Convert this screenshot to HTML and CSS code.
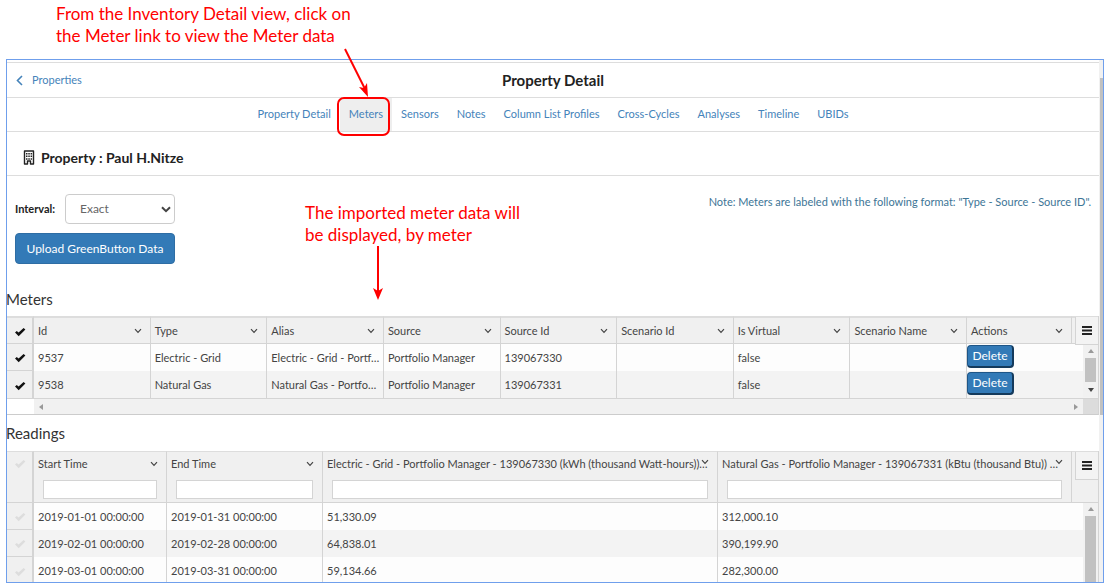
FILE: index.html
```
<!DOCTYPE html>
<html lang="en">
<head>
<meta charset="utf-8">
<title>Property Detail</title>
<link rel="stylesheet" href="styles.css">
</head>
<body>
<svg class="symbols" aria-hidden="true">
  <symbol id="check" viewBox="0 0 12 10"><path d="M1 5.6 2.8 3.9 4.6 5.5 9.6 1 11.4 2.6 4.7 9.2Z"/></symbol>
  <symbol id="down" viewBox="0 0 8 6"><path d="M1 1.2 4 4.4 7 1.2" fill="none" stroke="currentColor" stroke-width="1.2"/></symbol>
  <symbol id="bars" viewBox="0 0 10 9"><path d="M0 0h10v2H0zM0 3.5h10v2H0zM0 7h10v2H0z"/></symbol>
</svg>
<p class="note note-top">From the Inventory Detail view, click on<br>the Meter link to view the Meter data</p>
<main class="frame">
  <div class="content">
    <header class="title-bar">
      <a class="back" href="#"><svg class="back-icon" viewBox="0 0 7 11"><path d="M6 1 1.5 5.5 6 10" fill="none" stroke="currentColor" stroke-width="1.6"/></svg>Properties</a>
      <h1>Property Detail</h1>
    </header>
    <nav class="tabs">
      <a href="#">Property Detail</a>
      <a href="#" class="active">Meters</a>
      <a href="#">Sensors</a>
      <a href="#">Notes</a>
      <a href="#">Column List Profiles</a>
      <a href="#">Cross-Cycles</a>
      <a href="#">Analyses</a>
      <a href="#">Timeline</a>
      <a href="#">UBIDs</a>
    </nav>
    <h2 class="property">
      <svg class="building" viewBox="0 0 12 15"><path d="M1.5 1h9v13h-3v-3h-3v3h-3z" fill="none" stroke="currentColor" stroke-width="1.4" stroke-linejoin="round"/><path d="M3 3h1.5v1.5H3zM5.3 3h1.5v1.5H5.3zM7.6 3h1.5v1.5H7.6zM3 5.6h1.5v1.5H3zM5.3 5.6h1.5v1.5H5.3zM7.6 5.6h1.5v1.5H7.6zM3 8.2h1.5v1.5H3zM5.3 8.2h1.5v1.5H5.3zM7.6 8.2h1.5v1.5H7.6z" fill="currentColor"/></svg>
      Property : Paul H.Nitze
    </h2>
    <section class="controls">
      <div class="actions">
        <div class="interval">
          <label for="interval">Interval:</label>
          <span class="select-wrap"><select id="interval"><option>Exact</option></select>
          <svg class="select-arrow" viewBox="0 0 10 7"><path d="M1 1.2 5 5.2 9 1.2" fill="none" stroke="currentColor" stroke-width="2"/></svg></span>
        </div>
        <button class="upload" type="button">Upload GreenButton Data</button>
      </div>
      <p class="format">Note: Meters are labeled with the following format: "Type - Source - Source ID".</p>
    </section>

    <h3>Meters</h3>
    <div class="grid meters">
      <table>
        <colgroup><col class="c-check"><col><col><col><col><col><col><col><col><col class="c-actions"><col class="c-menu"></colgroup>
        <thead>
          <tr>
            <th class="pick"><svg class="check"><use href="#check"/></svg></th>
            <th><div class="head">Id<svg class="down"><use href="#down"/></svg></div></th>
            <th><div class="head">Type<svg class="down"><use href="#down"/></svg></div></th>
            <th><div class="head">Alias<svg class="down"><use href="#down"/></svg></div></th>
            <th><div class="head">Source<svg class="down"><use href="#down"/></svg></div></th>
            <th><div class="head">Source Id<svg class="down"><use href="#down"/></svg></div></th>
            <th><div class="head">Scenario Id<svg class="down"><use href="#down"/></svg></div></th>
            <th><div class="head">Is Virtual<svg class="down"><use href="#down"/></svg></div></th>
            <th><div class="head">Scenario Name<svg class="down"><use href="#down"/></svg></div></th>
            <th><div class="head">Actions<svg class="down"><use href="#down"/></svg></div></th>
            <th class="end"></th>
          </tr>
        </thead>
        <tbody>
          <tr><td class="pick"><svg class="check"><use href="#check"/></svg></td><td>9537</td><td>Electric - Grid</td><td>Electric - Grid - Portf…</td><td>Portfolio Manager</td><td>139067330</td><td></td><td>false</td><td></td><td class="act" colspan="2"><button class="delete" type="button">Delete</button></td></tr>
          <tr><td class="pick"><svg class="check"><use href="#check"/></svg></td><td>9538</td><td>Natural Gas</td><td>Natural Gas - Portfo…</td><td>Portfolio Manager</td><td>139067331</td><td></td><td>false</td><td></td><td class="act" colspan="2"><button class="delete" type="button">Delete</button></td></tr>
        </tbody>
      </table>
      <button class="menu" type="button" aria-label="Meters grid menu"><svg class="bars"><use href="#bars"/></svg></button>
      <div class="vbar"><i class="up"></i><b></b><i class="dn"></i></div>
      <div class="hbar"><i class="lt"></i><i class="rt"></i><b></b></div>
    </div>

    <h3>Readings</h3>
    <div class="grid readings">
      <table>
        <colgroup><col class="c-check"><col class="c-start"><col class="c-end"><col class="c-electric"><col><col class="c-menu"></colgroup>
        <thead>
          <tr>
            <th class="pick"><svg class="check"><use href="#check"/></svg></th>
            <th><div class="head">Start Time<svg class="down"><use href="#down"/></svg></div><input type="text" aria-label="Filter start time"></th>
            <th><div class="head">End Time<svg class="down"><use href="#down"/></svg></div><input type="text" aria-label="Filter end time"></th>
            <th><div class="head"><span class="long">Electric - Grid - Portfolio Manager - 139067330 (kWh (thousand Watt-hours))…</span><svg class="down over"><use href="#down"/></svg></div><input type="text" aria-label="Filter electric readings"></th>
            <th><div class="head"><span class="long">Natural Gas - Portfolio Manager - 139067331 (kBtu (thousand Btu)) …</span><svg class="down over"><use href="#down"/></svg></div><input type="text" aria-label="Filter gas readings"></th>
            <th class="end"></th>
          </tr>
        </thead>
        <tbody>
          <tr><td class="pick"><svg class="check"><use href="#check"/></svg></td><td>2019-01-01 00:00:00</td><td>2019-01-31 00:00:00</td><td>51,330.09</td><td colspan="2">312,000.10</td></tr>
          <tr><td class="pick"><svg class="check"><use href="#check"/></svg></td><td>2019-02-01 00:00:00</td><td>2019-02-28 00:00:00</td><td>64,838.01</td><td colspan="2">390,199.90</td></tr>
          <tr><td class="pick"><svg class="check"><use href="#check"/></svg></td><td>2019-03-01 00:00:00</td><td>2019-03-31 00:00:00</td><td>59,134.66</td><td colspan="2">282,300.00</td></tr>
        </tbody>
      </table>
      <button class="menu" type="button" aria-label="Readings grid menu"><svg class="bars"><use href="#bars"/></svg></button>
      <div class="vbar"><i class="up"></i><b></b></div>
    </div>
  </div>
  <div class="page-bar"><b></b></div>
</main>
<p class="note note-mid">The imported meter data will<br>be displayed, by meter</p>
<div class="ring"></div>
<svg class="arrow arrow-top" viewBox="0 0 30 52"><path d="M3 1 23 41" stroke="currentColor" stroke-width="2"/><path d="M26 49 17 39 22 40 25 35Z" fill="currentColor"/></svg>
<svg class="arrow arrow-mid" viewBox="0 0 10 54"><path d="M5 0V46" stroke="currentColor" stroke-width="2"/><path d="M5 54 0 42 5 45 10 42Z" fill="currentColor"/></svg>
</body>
</html>
```
FILE: styles.css
```
* { box-sizing: border-box; }
body {
  margin: 0;
  padding: 3px 5px 5px 6px;
  position: relative;
  background: #fff;
  color: #444;
  font: 11px/16px Lato, "Noto Sans", sans-serif;
}
h1, h2, h3, p { margin: 0; }
a { color: #4583ba; text-decoration: none; }
button, input, select { font: inherit; }
.symbols { position: absolute; width: 0; height: 0; }

.note { color: #f00; font: 17px/22px Lato, sans-serif; }
.note-top { padding: 0 0 0 50px; height: 56px; }

.frame {
  display: flex;
  height: 524px;
  border: 1px solid #6f9fec;
  overflow: hidden;
}
.content { flex: 1; min-width: 0; padding-top: 2px; }
.page-bar { width: 4px; background: #f1f1f1; padding: 18px 0 0 1px; }
.page-bar b { display: block; height: 337px; background: #c1c1c1; }

.title-bar {
  display: grid;
  grid-template-columns: 1fr auto 1fr;
  align-items: center;
  height: 36px;
  border-top: 1px solid #ddd;
  border-bottom: 1px solid #ddd;
}
.back { display: flex; align-items: center; gap: 9px; padding-left: 9px; }
.back-icon { width: 7px; height: 11px; }
h1 { font-size: 15px; line-height: 20px; color: #222; }
.tabs {
  display: flex;
  justify-content: center;
  height: 34px;
  border-bottom: 1px solid #ddd;
}
.tabs a { padding: 8px 9px; }
.tabs .active { background: #eee; }
.property {
  display: flex;
  align-items: center;
  gap: 6px;
  height: 44px;
  padding: 8px 16px 0;
  border-bottom: 1px solid #ddd;
  font-size: 14px;
  color: #222;
}
.building { width: 12px; height: 15px; }

.controls {
  display: flex;
  justify-content: space-between;
  padding: 18px 8px 0 8px;
  height: 112px;
}
.actions { width: 160px; }
.interval { display: flex; justify-content: space-between; align-items: center; margin-bottom: 9px; }
.interval label { font-weight: bold; color: #222; }
.select-wrap { position: relative; }
.select-wrap select {
  display: block;
  appearance: none;
  width: 110px;
  height: 30px;
  padding: 0 14px;
  border: 1px solid #ccc;
  border-radius: 4px;
  background: #fff;
  color: #666;
  font-size: 12px;
}
.select-arrow { position: absolute; right: 4px; top: 12px; width: 10px; height: 7px; color: #444; }
.upload {
  width: 100%;
  height: 31px;
  padding: 0;
  border: 1px solid #2e6da4;
  border-radius: 4px;
  background: #337ab7;
  color: #fff;
  font-size: 12px;
}
.format { color: #3d7596; }

h3 { margin-left: -1px; font-size: 15px; line-height: 22px; font-weight: normal; color: #333; }

.grid { position: relative; border-right: 1px solid #d4d4d4; }
.grid table { width: 100%; table-layout: fixed; border-collapse: separate; border-spacing: 0; }
.c-check { width: 27px; }
.c-actions { width: 105px; }
.c-menu { width: 26px; }
.c-start { width: 133px; }
.c-end { width: 156px; }
.c-electric { width: 395px; }
th, td {
  height: 27px;
  padding: 0 4px;
  border-right: 1px solid #d4d4d4;
  text-align: left;
  font-weight: normal;
  white-space: nowrap;
  overflow: hidden;
  text-overflow: ellipsis;
}
th { height: 28px; background: #f0f0f0; border-top: 2px solid #ddd; border-bottom: 1px solid #d4d4d4; color: #444; }
th.end, td:last-child { border-right: 0; }
td { padding-right: 0; background: #fdfdfd; }
tr:nth-child(even) td { background: #f3f3f3; }
tbody tr:last-child td { border-bottom: 1px solid #d4d4d4; height: 28px; }
.pick { padding: 0; text-align: center; border-right-width: 2px; }
tbody .pick, tbody tr:nth-child(even) .pick { background: #f0f0f0; border-bottom: 1px solid #d4d4d4; }
.check { display: inline-block; width: 12px; height: 10px; vertical-align: middle; fill: #111; }
.head { position: relative; display: flex; justify-content: space-between; align-items: center; }
.down { flex: none; width: 8px; height: 6px; margin-right: 4px; color: #444; }
.long { overflow: hidden; text-overflow: ellipsis; }
.down.over { position: absolute; right: 0; top: 4px; }
.act { padding: 0; }
.delete {
  display: block;
  width: 47px;
  height: 23px;
  margin-bottom: 3px;
  padding: 0;
  border: 1px solid #1f5687;
  border-right: 2px solid #143a5c;
  border-bottom: 2px solid #143a5c;
  border-radius: 4px;
  background: #337ab7;
  color: #fff;
  font-size: 12px;
  line-height: 16px;
}
.menu {
  position: absolute;
  right: 0;
  top: 1px;
  width: 23px;
  height: 28px;
  padding: 0;
  border: 1px solid #d4d4d4;
  border-top: 0;
  border-right: 0;
  background: #f3f3f3;
}
.bars { width: 10px; height: 9px; fill: #222; }

.vbar {
  position: absolute;
  right: 0;
  top: 29px;
  bottom: 17px;
  width: 15px;
  display: flex;
  flex-direction: column;
  align-items: center;
  justify-content: space-between;
  padding: 4px 2px 5px;
  background: #f1f1f1;
}
.vbar b { align-self: stretch; flex: 1; margin: 5px 0 6px; background: #c1c1c1; }
.up, .dn { border: 3px solid transparent; border-top: 0; border-bottom: 4px solid #999; }
.dn { border-top: 4px solid #444; border-bottom: 0; }
.hbar {
  display: flex;
  align-items: center;
  justify-content: space-between;
  position: relative;
  height: 15px;
  margin-left: 27px;
  padding: 0 20px 0 5px;
  background: #f1f1f1;
}
.hbar b { position: absolute; right: 0; top: 0; width: 15px; height: 15px; background: #dcdcdc; }
.lt, .rt { border: 3px solid transparent; border-left: 0; border-right: 4px solid #999; }
.rt { border-left: 4px solid #999; border-right: 0; }

.meters { border-bottom: 1px solid #ccc; margin-bottom: 7px; margin-top: 6px; }
.readings { margin-top: 7px; }
.readings .check { fill: #ddd; }
.readings th { height: 52px; padding: 3px 4px; vertical-align: top; border-top-width: 1px; }
.readings .head { height: 17px; }
.readings input {
  display: block;
  width: calc(100% - 10px);
  height: 19px;
  margin: 8px 0 0 5px;
  border: 1px solid #d4d4d4;
  background: #fff;
}
.readings .vbar { top: 52px; bottom: 0; padding-bottom: 0; }
.readings .vbar b { margin-bottom: 0; }

.note-mid { position: absolute; left: 305px; top: 202px; }
.ring {
  position: absolute;
  left: 337px;
  top: 97px;
  width: 53px;
  height: 39px;
  border: 2px solid #f00;
  border-radius: 7px;
}
.arrow { position: absolute; color: #f00; }
.arrow-top { left: 342px; top: 48px; width: 30px; height: 52px; }
.arrow-mid { left: 373px; top: 246px; width: 10px; height: 54px; }
```
